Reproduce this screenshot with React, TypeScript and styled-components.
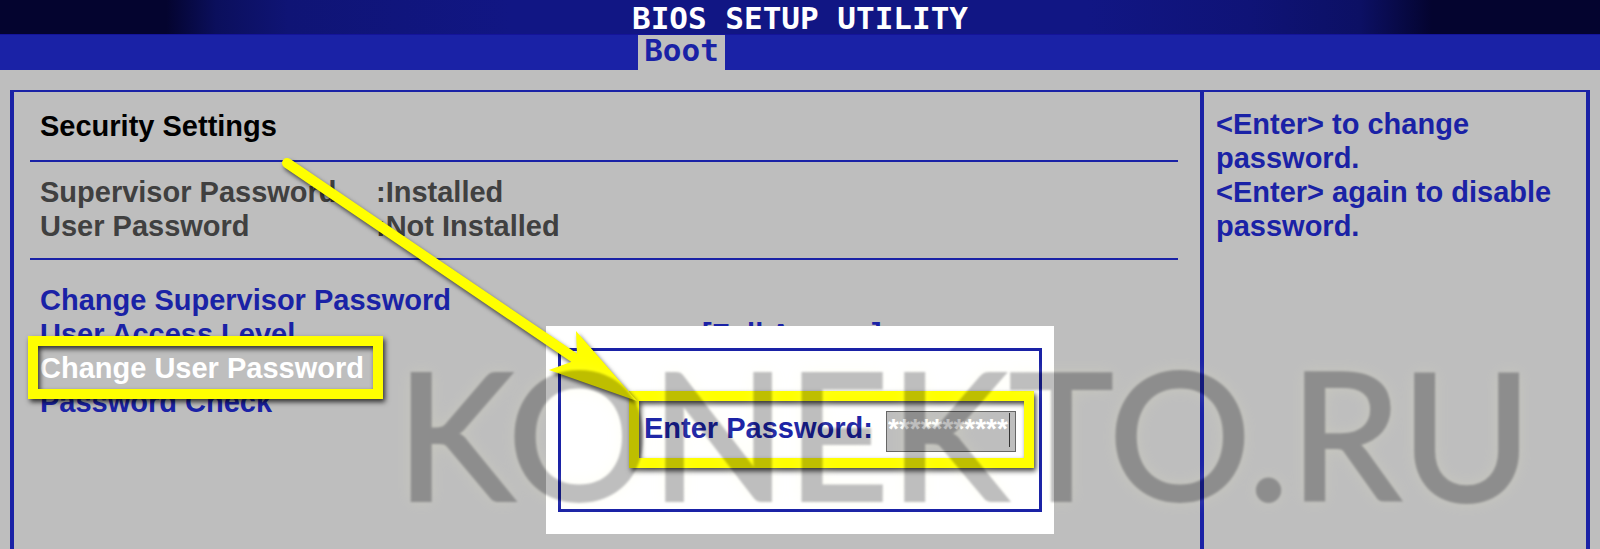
import React, { useState } from "react";
import styled, { createGlobalStyle, css } from "styled-components";

const blue = "#1a22a6";
const grey = "#bebebe";
const yellow = "#ffff00";

const GlobalStyle = createGlobalStyle`
  *, *::before, *::after { box-sizing: border-box; }
  body {
    margin: 0;
    background: ${grey};
    color: ${blue};
    font: bold 29px/34px "Liberation Sans", Arial, sans-serif;
  }
  h1, h2, p, dl, dd, ul { margin: 0; padding: 0; font: inherit; }
`;

const Page = styled.div`
  position: relative;
  display: flex;
  flex-direction: column;
  min-height: 100vh;
  overflow: hidden;
`;

const TitleBar = styled.header`
  height: 35px;
  border-bottom: 1px solid #14149a;
  background: linear-gradient(
    90deg,
    #04042f 10.4%,
    #0b0f5c 13.5%,
    #0f1475 18%,
    #111684 32%,
    #111684 68%,
    #0f1377 78%,
    #0c1064 85%,
    #04042f 89.5%
  );
  color: #fff;
  text-align: center;
`;

const Title = styled.h1`
  font: bold 31px/36px "DejaVu Sans Mono", monospace;
`;

const TabBar = styled.nav`
  display: flex;
  justify-content: center;
  height: 35px;
  padding-right: 237px;
  background: ${blue};
`;

const Tab = styled.button`
  width: 87px;
  padding: 0;
  border: 0;
  background: ${grey};
  color: ${blue};
  font: bold 31px/30px "DejaVu Sans Mono", monospace;
  display: flex;
  justify-content: center;
`;

const Frame = styled.main`
  display: flex;
  flex: 1;
  margin: 20px 10px 0;
  border: solid ${blue};
  border-width: 2px 4px 0;
`;

const Settings = styled.section`
  flex: 1;
  min-width: 0;
  padding: 17px 22px 0 16px;
`;

const Heading = styled.h2`
  padding: 0 10px 17px;
  border-bottom: 2px solid ${blue};
  color: #000;
`;

const StatusList = styled.dl`
  padding: 13px 10px 15px;
  border-bottom: 2px solid ${blue};
  color: #404040;
`;

const StatusRow = styled.div`
  display: grid;
  grid-template-columns: 336px 1fr;
`;

const Menu = styled.ul`
  padding: 23px 10px 0;
  list-style: none;
`;

const callout = css`
  border: 10px solid ${yellow};
  box-shadow: 2px 3px 5px rgba(0, 0, 0, 0.75),
    inset 2px 3px 5px rgba(0, 0, 0, 0.75);
`;

const MenuRow = styled.li`
  display: grid;
  grid-template-columns: 662px 1fr;
`;

const MenuItem = styled.button<{ $selected?: boolean }>`
  position: relative;
  justify-self: start;
  padding: 0;
  border: 0;
  background: none;
  color: ${(p) => (p.$selected ? "#fff" : blue)};
  font: inherit;
  white-space: nowrap;

  ${(p) =>
    p.$selected &&
    css`
      &::after {
        content: "";
        position: absolute;
        z-index: 1;
        inset: -15px -19px -14px -12px;
        ${callout}
      }
    `}
`;

const Help = styled.aside`
  flex: 0 0 386px;
  padding: 15px 0 0 12px;
  border-left: 4px solid ${blue};
`;

const Dialog = styled.section`
  position: absolute;
  z-index: 2;
  top: 326px;
  left: 50%;
  width: 508px;
  margin-left: -254px;
  padding: 22px 12px;
  background: #fff;
`;

const DialogFrame = styled.form`
  padding: 40px 5px 41px 68px;
  border: 3px solid ${blue};
`;

const PasswordRow = styled.div`
  display: flex;
  justify-content: space-between;
  padding: 10px 8px 6px 5px;
  ${callout}
`;

const InputWrap = styled.span`
  position: relative;
  display: flex;

  &::after {
    content: "";
    position: absolute;
    top: 2px;
    right: 6px;
    width: 1px;
    height: 34px;
    background: #333;
  }
`;

const PasswordInput = styled.input`
  width: 130px;
  height: 41px;
  padding: 0 0 5px 1px;
  border: 1px solid #666;
  border-radius: 0;
  outline: 0;
  background: ${grey};
  color: #fff;
  font: inherit;
  font-size: 28px;
`;

const Arrow = styled.svg`
  position: absolute;
  z-index: 3;
  top: 140px;
  left: 270px;
  filter: drop-shadow(2px 3px 2px rgba(0, 0, 0, 0.65));
  pointer-events: none;
`;

const Watermark = styled.div`
  position: absolute;
  z-index: 4;
  top: 332px;
  left: 396px;
  color: #000;
  font: 500 178px/200px Lato, sans-serif;
  white-space: nowrap;
  -webkit-text-stroke: 2px #000;
  text-shadow: 0 0 16px rgba(255, 255, 190, 0.7);
  filter: blur(1px);
  opacity: 0.25;
  pointer-events: none;
`;

const statuses = [
  ["Supervisor Password", ":Installed"],
  ["User Password", ":Not Installed"],
];

const items = [
  { label: "Change Supervisor Password" },
  { label: "User Access Level", value: "[Full Access]" },
  { label: "Change User Password" },
  { label: "Password Check" },
];

export default function App() {
  const [selected, setSelected] = useState("Change User Password");
  const [password, setPassword] = useState("***********");

  return (
    <Page>
      <GlobalStyle />
      <TitleBar>
        <Title>BIOS SETUP UTILITY</Title>
      </TitleBar>
      <TabBar>
        <Tab type="button">Boot</Tab>
      </TabBar>
      <Frame>
        <Settings>
          <Heading>Security Settings</Heading>
          <StatusList>
            {statuses.map(([name, state]) => (
              <StatusRow key={name}>
                <dt>{name}</dt>
                <dd>{state}</dd>
              </StatusRow>
            ))}
          </StatusList>
          <Menu>
            {items.map(({ label, value }) => (
              <MenuRow key={label}>
                <MenuItem
                  type="button"
                  $selected={label === selected}
                  onClick={() => setSelected(label)}
                >
                  {label}
                </MenuItem>
                {value && <span>{value}</span>}
              </MenuRow>
            ))}
          </Menu>
        </Settings>
        <Help>
          <p>&lt;Enter&gt; to change password.</p>
          <p>&lt;Enter&gt; again to disable password.</p>
        </Help>
      </Frame>

      <Dialog role="dialog" aria-label="Enter Password">
        <DialogFrame onSubmit={(e) => e.preventDefault()}>
          <PasswordRow>
            <label htmlFor="password">Enter Password:</label>
            <InputWrap>
              <PasswordInput
                id="password"
                value={password}
                onChange={(e) => setPassword(e.target.value.replace(/./g, "*"))}
              />
            </InputWrap>
          </PasswordRow>
        </DialogFrame>
      </Dialog>

      <Arrow width="380" height="275" aria-hidden="true">
        <path d="M17 23 L309 221" stroke={yellow} strokeWidth="10" strokeLinecap="round" />
        <path d="M367 261 L306 191 L307 214 L301 222 L279 230 Z" fill={yellow} />
      </Arrow>
      <Watermark>KONEKTO.RU</Watermark>
    </Page>
  );
}
